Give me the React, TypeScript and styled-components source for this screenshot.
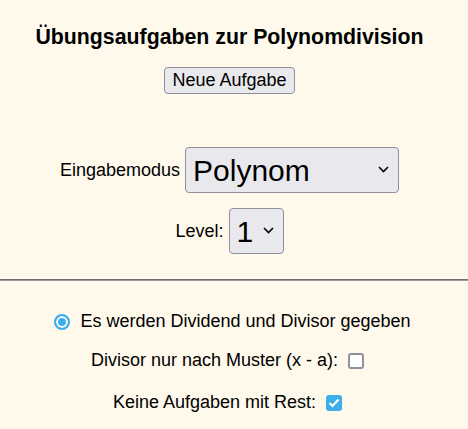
import React from 'react';
import styled, { createGlobalStyle } from 'styled-components';

const BLUE = '#3daee9';

const GlobalStyle = createGlobalStyle`
  html, body {
    margin: 0;
    padding: 0;
    background: #fff9ec;
  }
  body {
    font-family: "Liberation Sans", Arial, sans-serif;
    font-size: 18px;
    color: #000;
  }
`;

const Page = styled.div`
  display: flex;
  flex-direction: column;
  align-items: center;
  padding-right: 9px;
`;

const Title = styled.h3`
  font-size: 21.3px;
  font-weight: bold;
  margin: 25px 0 0;
  line-height: 24px;
`;

const NewButton = styled.button`
  font-family: inherit;
  font-size: 18px;
  color: #000;
  margin-top: 18px;
  padding: 2px 7px;
  background: #e9e9ed;
  border: 1px solid #8f8f9d;
  border-radius: 4px;
`;

const Row = styled.label<{ $top: number }>`
  display: flex;
  align-items: center;
  gap: 5px;
  margin-top: ${(p) => p.$top}px;
  padding-top: 10px;
`;

const SelectBox = styled.span`
  position: relative;
  display: inline-flex;
`;

const BigSelect = styled.select<{ $width: number }>`
  appearance: none;
  font-family: inherit;
  font-size: 30px;
  color: #000;
  width: ${(p) => p.$width}px;
  height: 46px;
  padding: 0 0 0 7px;
  background: #e9e9ed;
  border: 1px solid #8f8f9d;
  border-radius: 4px;
`;

const Chevron = styled.svg`
  position: absolute;
  right: 10px;
  top: 50%;
  margin-top: -4px;
  pointer-events: none;
`;

const Divider = styled.div`
  align-self: stretch;
  height: 0;
  margin-right: -9px;
  border-top: 1px solid #6f6f6f;
  border-bottom: 1px solid #9a9a9a;
  margin-top: 25px;
`;

const Options = styled.div`
  display: flex;
  flex-direction: column;
  align-items: center;
  margin-top: 30px;
`;

const OptionRow = styled.label<{ $top?: number; $shift?: number }>`
  display: flex;
  align-items: center;
  gap: 10px;
  line-height: 21px;
  margin-top: ${(p) => p.$top ?? 0}px;
  margin-left: ${(p) => Math.max(0, p.$shift ?? 0)}px;
  margin-right: ${(p) => Math.max(0, -(p.$shift ?? 0))}px;
`;

const Radio = styled.input`
  appearance: none;
  margin: 0;
  width: 16px;
  height: 16px;
  border-radius: 50%;
  border: 2px solid ${BLUE};
  background: ${BLUE};
  box-shadow: inset 0 0 0 2px #fff;
`;

const CheckWrap = styled.span`
  position: relative;
  display: inline-flex;
`;

const Check = styled.input`
  appearance: none;
  margin: 0;
  width: 16px;
  height: 16px;
  border-radius: 3px;
  border: 2px solid #8f8f9d;
  background: #fff;

  &:checked {
    border-color: ${BLUE};
    background: ${BLUE};
  }
`;

const CheckMark = styled.svg`
  position: absolute;
  left: 2px;
  top: 3px;
  pointer-events: none;
`;

function Select({ width, value, options }: { width: number; value: string; options: string[] }) {
  return (
    <SelectBox>
      <BigSelect $width={width} defaultValue={value}>
        {options.map((o) => (
          <option key={o}>{o}</option>
        ))}
      </BigSelect>
      <Chevron width="11" height="7" viewBox="0 0 11 7">
        <path d="M1 1 L5.5 5.5 L10 1" fill="none" stroke="#000" strokeWidth="1.6" />
      </Chevron>
    </SelectBox>
  );
}

function Checkbox({ checked }: { checked?: boolean }) {
  return (
    <CheckWrap>
      <Check type="checkbox" defaultChecked={checked} />
      {checked && (
        <CheckMark width="12" height="10" viewBox="0 0 12 10">
          <path d="M1.5 5 L4.5 8 L10.5 1.5" fill="none" stroke="#fff" strokeWidth="2.2" />
        </CheckMark>
      )}
    </CheckWrap>
  );
}

export default function App() {
  return (
    <>
      <GlobalStyle />
      <Page>
        <Title>Übungsaufgaben zur Polynomdivision</Title>
        <NewButton>Neue Aufgabe</NewButton>
        <Row $top={43}>
          Eingabemodus
          <Select width={214} value="Polynom" options={['Polynom', 'Koeffizienten']} />
        </Row>
        <Row $top={5}>
          Level:
          <Select width={55} value="1" options={['1', '2', '3']} />
        </Row>
        <Divider />
        <Options>
          <OptionRow $shift={6}>
            <Radio type="radio" name="mode" defaultChecked />
            Es werden Dividend und Divisor gegeben
          </OptionRow>
          <OptionRow $top={18} $shift={-4}>
            Divisor nur nach Muster (x - a):
            <Checkbox />
          </OptionRow>
          <OptionRow $top={21} $shift={-4}>
            Keine Aufgaben mit Rest:
            <Checkbox checked />
          </OptionRow>
        </Options>
      </Page>
    </>
  );
}
